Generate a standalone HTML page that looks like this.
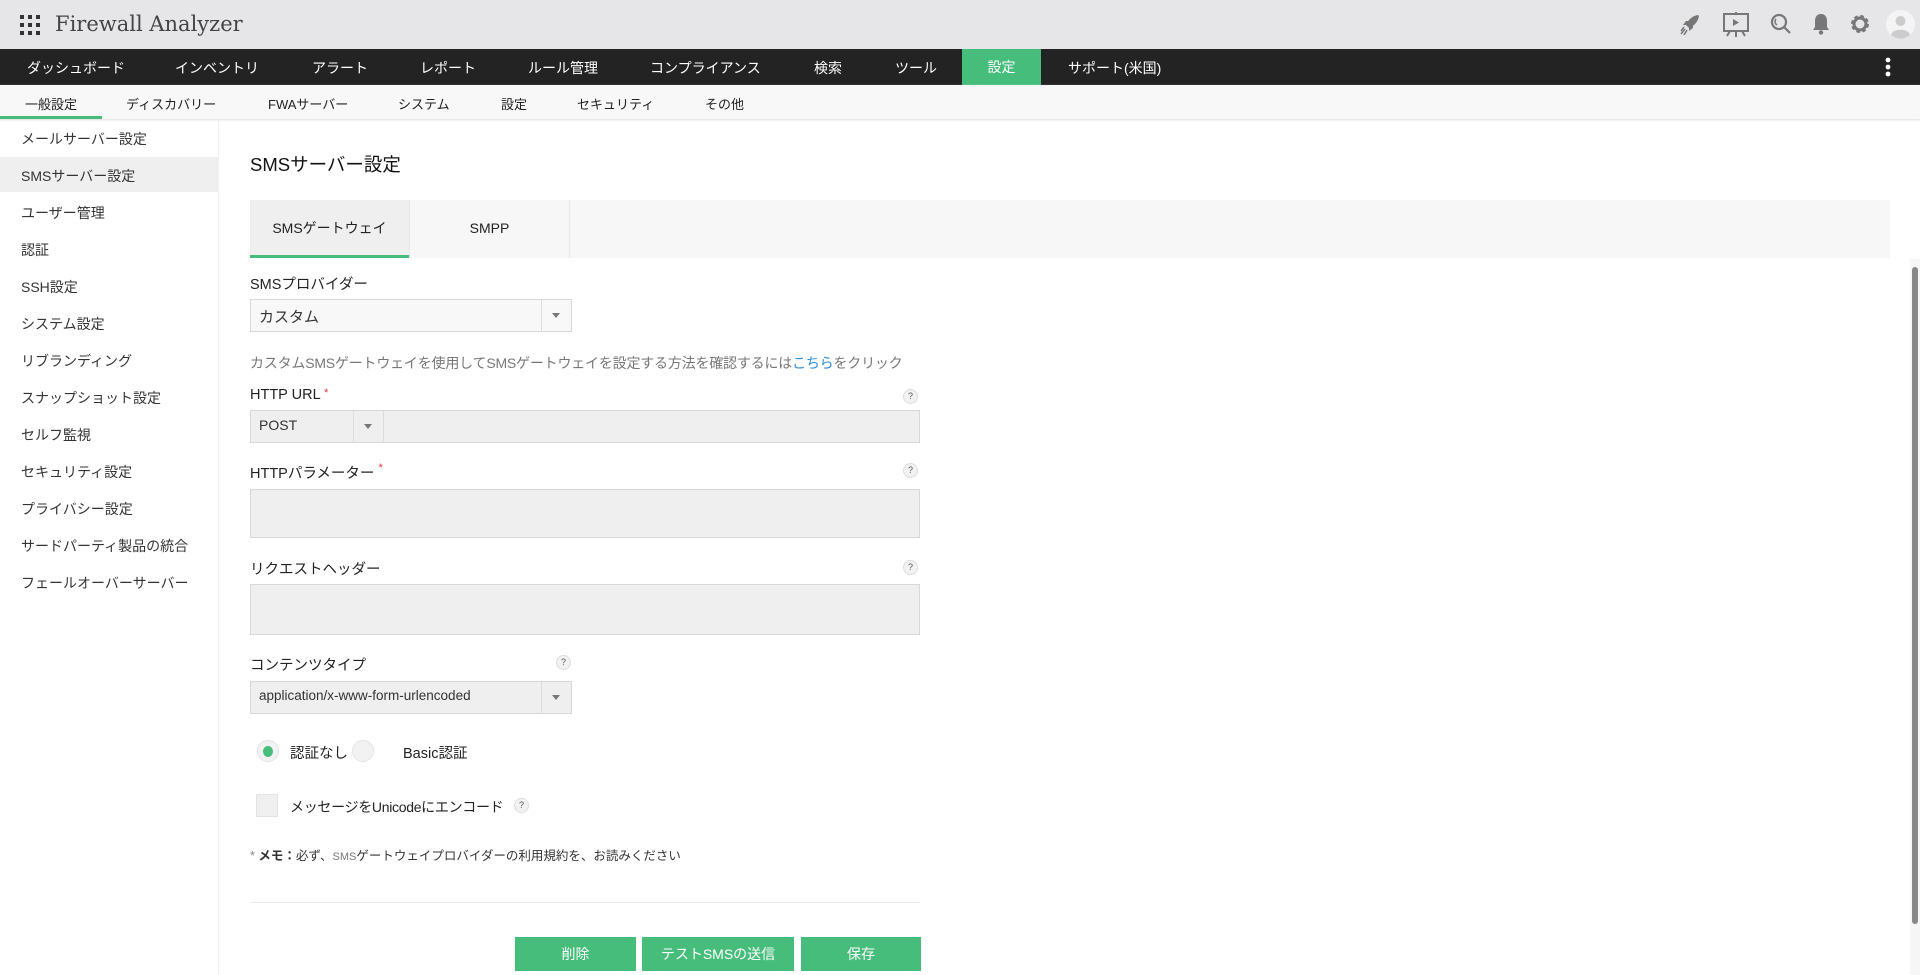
<!DOCTYPE html>
<html><head><meta charset="utf-8"><style>
*{box-sizing:border-box;margin:0;padding:0}
body{width:1920px;height:975px;overflow:hidden;background:#fff;font-family:"Liberation Sans","Noto Sans CJK JP",sans-serif;color:#222;position:relative}
.a{position:absolute;white-space:nowrap}
#hdr{position:absolute;left:0;top:0;width:1920px;height:49px;background:#e6e6e8}
#nav{position:absolute;left:0;top:49px;width:1920px;height:36px;background:#232323;color:#fff;font-size:14px}
#nav .a{top:9px}
#sub{position:absolute;left:0;top:85px;width:1920px;height:34px;background:#f8f8f8;font-size:13px;box-shadow:0 1px 2px #ddd}
#sub .a{top:9px}
.side{font-size:14px;color:#333}
.lbl{font-size:14.5px;color:#222}
.q{position:absolute;width:15px;height:15px;border-radius:50%;background:#f2f2f2;border:1px solid #ddd;font-size:9px;color:#555;text-align:center;line-height:13px}
.box{position:absolute;background:#efefef;border:1px solid #d8d8d8}
.btn{position:absolute;top:937px;height:34px;background:#46bd7b;color:#fff;font-size:14px;text-align:center;line-height:34px}
.arr{position:absolute;width:0;height:0;border-left:4px solid transparent;border-right:4px solid transparent;border-top:5px solid #777}
</style></head><body>
<div id="hdr">
 <svg class="a" style="left:20px;top:15px" width="20" height="20" viewBox="0 0 20 20" fill="#333"><rect x="0" y="0" width="4" height="4"/><rect x="8" y="0" width="4" height="4"/><rect x="16" y="0" width="4" height="4"/><rect x="0" y="8" width="4" height="4"/><rect x="8" y="8" width="4" height="4"/><rect x="16" y="8" width="4" height="4"/><rect x="0" y="16" width="4" height="4"/><rect x="8" y="16" width="4" height="4"/><rect x="16" y="16" width="4" height="4"/></svg>
 <div class="a" style="left:55px;top:12px;font-family:'DejaVu Serif','Liberation Serif',serif;font-size:21px;color:#444">Firewall Analyzer</div>
 <svg class="a" style="left:1680px;top:14px" width="20" height="22" viewBox="0 0 20 22" fill="#777"><path d="M18 1 C12 2 8 6 6 11 L9 14 C14 12 18 8 19 2Z"/><path d="M6 11 L3 11 L6 7 L9 7Z M9 14 L9 17 L13 14 L13 11Z"/><path d="M5 15 L1 20 M7 16 L4 21 M4 13 L1 17" stroke="#777" stroke-width="1.5"/></svg>
 <svg class="a" style="left:1722px;top:12px" width="28" height="26" viewBox="0 0 28 26" fill="none" stroke="#777" stroke-width="2"><rect x="2" y="2" width="24" height="17"/><path d="M11 7 L17 10.5 L11 14Z" fill="#777" stroke="none"/><path d="M14 0V2 M14 19V25 M8 19 L5 24 M20 19 L23 24"/></svg>
 <svg class="a" style="left:1770px;top:13px" width="22" height="22" viewBox="0 0 22 22" fill="none" stroke="#777" stroke-width="2.2"><circle cx="9" cy="9" r="7"/><path d="M14 14 L20 20"/><path d="M6 6 A4 4 0 0 0 7 12" stroke-width="1.5"/></svg>
 <svg class="a" style="left:1812px;top:13px" width="18" height="22" viewBox="0 0 18 22" fill="#777"><path d="M9 1 C5 1 3 4 3 8 V14 L1 17 H17 L15 14 V8 C15 4 13 1 9 1Z"/><circle cx="9" cy="19.5" r="2.2"/></svg>
 <svg class="a" style="left:1849px;top:13px" width="22" height="22" viewBox="0 0 22 22"><circle cx="11" cy="11" r="7" fill="none" stroke="#777" stroke-width="4" stroke-dasharray="3.2 2.3"/><circle cx="11" cy="11" r="6" fill="none" stroke="#777" stroke-width="3"/><circle cx="11" cy="11" r="2.5" fill="#e6e6e8"/></svg>
 <svg class="a" style="left:1886px;top:10px" width="29" height="29" viewBox="0 0 29 29"><circle cx="14.5" cy="14.5" r="14.5" fill="#f4f4f4"/><circle cx="14.5" cy="11" r="5" fill="#ccc"/><path d="M5 25 C6 18 23 18 24 25 A14 14 0 0 1 5 25Z" fill="#ccc"/></svg>
</div>
<div id="nav">
 <div class="a" style="left:27px">ダッシュボード</div>
 <div class="a" style="left:175px">インベントリ</div>
 <div class="a" style="left:312px">アラート</div>
 <div class="a" style="left:420px">レポート</div>
 <div class="a" style="left:528px">ルール管理</div>
 <div class="a" style="left:650px">コンプライアンス</div>
 <div class="a" style="left:814px">検索</div>
 <div class="a" style="left:895px">ツール</div>
 <div class="a" style="left:962px;top:0;width:79px;height:36px;background:#46bd7b;text-align:center;line-height:36px">設定</div>
 <div class="a" style="left:1068px">サポート(米国)</div>
 <svg class="a" style="left:1885px;top:8px" width="6" height="20"><circle cx="3" cy="3" r="2.4" fill="#fff"/><circle cx="3" cy="10" r="2.4" fill="#fff"/><circle cx="3" cy="17" r="2.4" fill="#fff"/></svg>
</div>
<div id="sub">
 <div class="a" style="left:25px">一般設定</div>
 <div class="a" style="left:126px">ディスカバリー</div>
 <div class="a" style="left:268px">FWAサーバー</div>
 <div class="a" style="left:398px">システム</div>
 <div class="a" style="left:501px">設定</div>
 <div class="a" style="left:577px">セキュリティ</div>
 <div class="a" style="left:705px">その他</div>
 <div class="a" style="left:0;top:31px;width:102px;height:3px;background:#46bd7b"></div>
</div>
<div class="a" style="left:0;top:120px;width:219px;height:855px;border-right:1px solid #f0f0f0"></div>
<div class="a" style="left:0;top:157px;width:219px;height:35px;background:#efefef"></div>
<div class="side">
 <div class="a" style="left:21px;top:129px">メールサーバー設定</div>
 <div class="a" style="left:21px;top:166px">SMSサーバー設定</div>
 <div class="a" style="left:21px;top:203px">ユーザー管理</div>
 <div class="a" style="left:21px;top:240px">認証</div>
 <div class="a" style="left:21px;top:277px">SSH設定</div>
 <div class="a" style="left:21px;top:314px">システム設定</div>
 <div class="a" style="left:21px;top:351px">リブランディング</div>
 <div class="a" style="left:21px;top:388px">スナップショット設定</div>
 <div class="a" style="left:21px;top:425px">セルフ監視</div>
 <div class="a" style="left:21px;top:462px">セキュリティ設定</div>
 <div class="a" style="left:21px;top:499px">プライバシー設定</div>
 <div class="a" style="left:21px;top:536px">サードパーティ製品の統合</div>
 <div class="a" style="left:21px;top:573px">フェールオーバーサーバー</div>
</div>
<div class="a" style="left:250px;top:151px;font-size:18.5px;color:#111">SMSサーバー設定</div>
<div class="a" style="left:250px;top:200px;width:1640px;height:58px;background:#f7f7f7"></div>
<div class="a" style="left:250px;top:200px;width:159px;height:58px;background:#efefef;border-bottom:3px solid #46bd7b;text-align:center;line-height:56px;font-size:14px">SMSゲートウェイ</div>
<div class="a" style="left:409px;top:200px;width:161px;height:58px;border-left:1px solid #e6e6e6;border-right:1px solid #e6e6e6;text-align:center;line-height:56px;font-size:14px">SMPP</div>
<div class="a" style="left:1910px;top:259px;width:10px;height:716px;background:#f6f6f6"></div>
<div class="a" style="left:1912px;top:267px;width:6px;height:657px;background:#888;border-radius:3px"></div>

<div class="a lbl" style="left:250px;top:273px">SMSプロバイダー</div>
<div class="box" style="left:250px;top:299px;width:322px;height:33px;background:#f8f8f8"></div>
<div class="a" style="left:541px;top:300px;width:1px;height:31px;background:#ddd"></div>
<div class="arr" style="left:552px;top:313px"></div>
<div class="a" style="left:259px;top:306px;font-size:15px;color:#333">カスタム</div>
<div class="a" style="left:250px;top:353px;font-size:14px;color:#777;letter-spacing:-0.2px">カスタムSMSゲートウェイを使用してSMSゲートウェイを設定する方法を確認するには<span style="color:#2a8ee0">こちら</span>をクリック</div>

<div class="a lbl" style="left:250px;top:387px">HTTP URL <span style="color:#e33;font-size:11px;vertical-align:top">*</span></div>
<div class="q" style="left:903px;top:389px">?</div>
<div class="box" style="left:250px;top:410px;width:670px;height:33px"></div>
<div class="a" style="left:353px;top:411px;width:1px;height:31px;background:#ddd"></div>
<div class="a" style="left:383px;top:411px;width:1px;height:31px;background:#ddd"></div>
<div class="arr" style="left:364px;top:424px"></div>
<div class="a" style="left:259px;top:417px;font-size:14px;color:#333">POST</div>

<div class="a lbl" style="left:250px;top:462px">HTTPパラメーター <span style="color:#e33;font-size:11px;vertical-align:top">*</span></div>
<div class="q" style="left:903px;top:463px">?</div>
<div class="box" style="left:250px;top:489px;width:670px;height:49px"></div>
<div class="a lbl" style="left:250px;top:558px">リクエストヘッダー</div>
<div class="q" style="left:903px;top:560px">?</div>
<div class="box" style="left:250px;top:584px;width:670px;height:51px"></div>

<div class="a lbl" style="left:250px;top:654px">コンテンツタイプ</div>
<div class="q" style="left:556px;top:655px">?</div>
<div class="box" style="left:250px;top:681px;width:322px;height:33px"></div>
<div class="a" style="left:541px;top:682px;width:1px;height:31px;background:#ddd"></div>
<div class="arr" style="left:552px;top:695px"></div>
<div class="a" style="left:259px;top:688px;font-size:13.5px;color:#333">application/x-www-form-urlencoded</div>

<div class="a" style="left:257px;top:740px;width:22px;height:22px;border-radius:50%;background:#f2f2f2;border:1px solid #e3e3e3"></div>
<div class="a" style="left:263px;top:746px;width:10px;height:11px;border-radius:50%;background:#46bd7b"></div>
<div class="a" style="left:290px;top:742px;font-size:14.5px">認証なし</div>
<div class="a" style="left:352px;top:740px;width:22px;height:22px;border-radius:50%;background:#f2f2f2;border:1px solid #e3e3e3"></div>
<div class="a" style="left:403px;top:742px;font-size:14.5px">Basic認証</div>

<div class="a" style="left:256px;top:794px;width:22px;height:23px;background:#f0f0f0;border:1px solid #e3e3e3"></div>
<div class="a" style="left:290px;top:797px;font-size:14px;letter-spacing:-0.3px">メッセージをUnicodeにエンコード</div>
<div class="q" style="left:514px;top:798px">?</div>

<div class="a" style="left:250px;top:845px;font-size:12.5px;color:#333"><span style="color:#888">*</span> <b>メモ：</b>必ず、<span style="font-size:11px;color:#777">SMS</span>ゲートウェイプロバイダーの利用規約を、お読みください</div>
<div class="a" style="left:250px;top:902px;width:670px;height:1px;background:#e8e8e8"></div>
<div class="btn" style="left:515px;width:121px">削除</div>
<div class="btn" style="left:642px;width:152px">テストSMSの送信</div>
<div class="btn" style="left:801px;width:120px">保存</div>
</body></html>
